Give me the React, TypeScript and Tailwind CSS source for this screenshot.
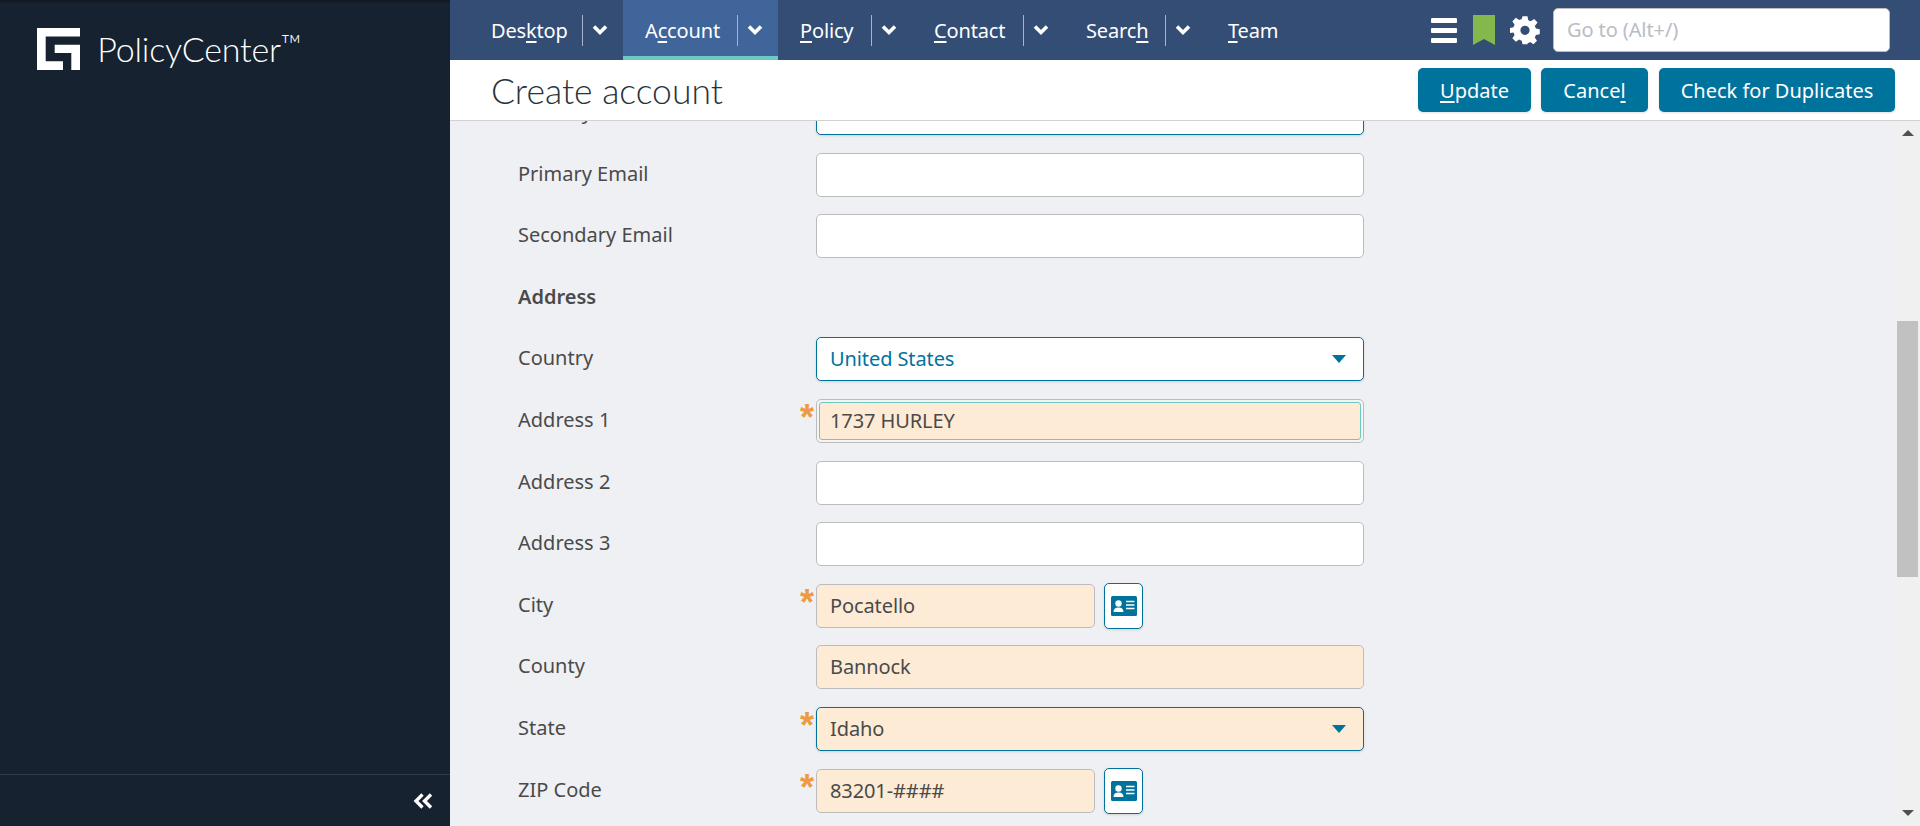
import { ReactNode } from 'react';

function Underlined({ before, letter, after }: { before?: string; letter: string; after?: string }) {
  return (
    <span>
      {before}
      <span className="underline underline-offset-[3px] decoration-[2px]">{letter}</span>
      {after}
    </span>
  );
}

function Chevron() {
  return (
    <svg viewBox="0 0 16 12" className="w-[16px] h-[12px]" fill="none" stroke="white" strokeWidth={3.6}>
      <path d="M2 2.5l6 6 6-6" />
    </svg>
  );
}

function NavItem({ label, split, active, w, pl }: { label: ReactNode; split?: boolean; active?: boolean; w: string; pl: string }) {
  return (
    <div className={`h-[60px] flex items-center ${pl} ${w} ${active ? 'bg-[#40659a] border-b-4 border-[#6cc8c0] pt-[4px]' : ''}`}>
      <span className="text-[20px] tracking-[-0.15px] pt-[1px]">{label}</span>
      {split && (
        <div className="flex items-center ml-auto mr-[15px]">
          <div className="w-px h-[31px] bg-[#a9b5c6] mr-[9px]" />
          <Chevron />
        </div>
      )}
    </div>
  );
}

function CardIcon() {
  return (
    <button className="w-[39px] h-[46px] -my-px ml-[9px] bg-white border border-[#00739d] rounded-[5px] flex items-center justify-center shadow-sm">
      <svg viewBox="0 0 26 20" className="w-[26px] h-[20px]">
        <rect width="26" height="20" rx="1.5" fill="#00739d" />
        <circle cx="7.5" cy="7.5" r="3.2" fill="white" />
        <path d="M2.5 16c0-3.2 2-4.6 5-4.6s5 1.4 5 4.6z" fill="white" />
        <path d="M15 5.5h8.5M15 9h8.5M15 12.5h8.5" stroke="white" strokeWidth="1.4" />
      </svg>
    </button>
  );
}

function Caret() {
  return (
    <svg viewBox="0 0 14 8" className="w-[14px] h-[8px] ml-auto mr-[17px]">
      <path d="M0 0h14L7 8z" fill="#00739d" />
    </svg>
  );
}

function Row({ label, required, children }: { label: string; required?: boolean; children?: ReactNode }) {
  return (
    <div className="h-[44px] flex items-center">
      <div className="w-[298px] text-[20px] text-[#4a4a4a] pb-[2px]">{label}</div>
      <div className="relative flex items-center">
        {required && (
          <span className="absolute left-[-16px] top-[-3px] text-[#ee9a3f] text-[36px] font-bold leading-[44px] h-[30px] font-['Liberation_Sans',sans-serif]">
            *
          </span>
        )}
        {children}
      </div>
    </div>
  );
}

function Field({ value, short, required }: { value?: string; short?: boolean; required?: boolean }) {
  return (
    <div
      className={`h-[44px] ${short ? 'w-[279px]' : 'w-[548px]'} ${required ? 'bg-[#feebd6]' : 'bg-white'} border border-[#bcbcbc] rounded-[5px] flex items-center pl-[13px] text-[20px] tracking-[-0.1px] text-[#4a4a4a]`}
    >
      {value}
    </div>
  );
}

function Select({ value, required }: { value: string; required?: boolean }) {
  return (
    <div
      className={`h-[44px] w-[548px] ${required ? 'bg-[#feebd6] text-[#4a4a4a]' : 'bg-white text-[#00739d]'} border border-[#00739d] rounded-[5px] flex items-center pl-[13px] text-[20px] tracking-[-0.1px] shadow-sm`}
    >
      {value}
      <Caret />
    </div>
  );
}

export default function App() {
  return (
    <div className="h-[826px] w-[1920px] flex overflow-hidden font-['Noto_Sans',sans-serif]">
      {/* sidebar */}
      <aside className="w-[450px] shrink-0 bg-[#172230] flex flex-col text-white">
        <div className="h-[4px] bg-gradient-to-b from-[#10171f] to-[#172230]" />
        <div className="flex items-start pl-[37px] pt-[24px] flex-1">
          <svg viewBox="0 0 43.300 42.300" className="w-[43.300px] h-[42.300px]" fill="white">
            <path d="M0 0h43.300v8.500H8.700v24.800H26v9H0z" />
            <path d="M17.700 16.700h25.600v25.600h-9V25H17.700z" />
          </svg>
          <div className="ml-[17px] -mt-[2px] text-[34px] leading-[46px] font-light font-['Lato',sans-serif] tracking-[-0.2px]">
            PolicyCenter<sup className="text-[28px] -top-[7px] relative align-baseline">™</sup>
          </div>
        </div>
        <div className="h-[52px] border-t border-[#2e3846] flex items-center justify-end pr-[17px]">
          <svg viewBox="0 0 20 16" className="w-[20px] h-[16px]" fill="none" stroke="white" strokeWidth={3.4}>
            <path d="M9.500 1.500L3 8l6.500 6.500M18 1.500L11.500 8l6.500 6.500" />
          </svg>
        </div>
      </aside>

      <div className="flex-1 flex flex-col min-w-0">
        {/* top nav */}
        <nav className="h-[60px] shrink-0 bg-[#334d75] flex items-center text-white">
          <NavItem w="w-[173px]" pl="pl-[41px]" split label={<Underlined before="Des" letter="k" after="top" />} />
          <NavItem w="w-[155px]" pl="pl-[22px]" split active label={<Underlined before="A" letter="c" after="count" />} />
          <NavItem w="w-[134px]" pl="pl-[22px]" split label={<Underlined letter="P" after="olicy" />} />
          <NavItem w="w-[152px]" pl="pl-[22px]" split label={<Underlined letter="C" after="ontact" />} />
          <NavItem w="w-[142px]" pl="pl-[22px]" split label={<Underlined before="Searc" letter="h" />} />
          <NavItem w="w-[100px]" pl="pl-[22px]" label={<Underlined letter="T" after="eam" />} />
          <div className="ml-auto flex items-center pr-[30px]">
            <div className="flex flex-col gap-[5px] w-[26px] mr-[16px]">
              <div className="h-[5px] bg-white rounded-[1px]" />
              <div className="h-[5px] bg-white rounded-[1px]" />
              <div className="h-[5px] bg-white rounded-[1px]" />
            </div>
            <svg viewBox="0 0 22 30" className="w-[22px] h-[30px] mr-[15px]">
              <path d="M0 0h22v30l-11-6-11 6z" fill="#84b84c" />
            </svg>
            <svg viewBox="0 0 24 24" className="w-[30px] h-[30px] mr-[13px]" fill="white">
              <path
                fillRule="evenodd"
                d="M10 1h4l.6 3.100c.7.200 1.400.500 2 .900l2.700-1.800 2.800 2.800L19.800 8.700c.400.600.700 1.300.900 2l3.100.600v4l-3.100.600c-.200.700-.500 1.400-.900 2l1.800 2.700-2.800 2.800-2.700-1.800c-.600.400-1.300.700-2 .900L14 23.400h-4l-.6-2.900c-.7-.200-1.400-.500-2-.900l-2.700 1.800-2.800-2.800 1.800-2.700c-.400-.600-.700-1.300-.900-2L0 14.300v-4l2.800-.600c.200-.700.500-1.400.900-2L1.900 5l2.800-2.800 2.700 1.800c.600-.400 1.300-.700 2-.900zM12 8.500a3.700 3.700 0 100 7.400 3.700 3.700 0 000-7.400z"
              />
            </svg>
            <div className="w-[337px] h-[44px] bg-white rounded-[5px] border border-[#bcbcbc] flex items-center pl-[13px] text-[20px] tracking-[-0.1px] text-[#b9bdc4]">
              Go to (Alt+/)
            </div>
          </div>
        </nav>

        {/* title bar */}
        <div className="h-[61px] shrink-0 bg-white border-b border-[#d2d2d2] flex items-start pl-[41px] pr-[25px] pt-[8px]">
          <h1 className="text-[35.500px] leading-[44px] mt-[1px] font-light font-['Lato',sans-serif] text-[#28323c]">Create account</h1>
          <div className="ml-auto flex gap-[10px] text-white text-[20px]">
            <button className="w-[113px] h-[44px] pt-[1px] bg-[#00739d] rounded-[5px] shadow-sm">
              <Underlined letter="U" after="pdate" />
            </button>
            <button className="w-[107px] h-[44px] pt-[1px] mr-[1px] bg-[#00739d] rounded-[5px] shadow-sm">
              <Underlined before="Cance" letter="l" />
            </button>
            <button className="w-[236px] h-[44px] pt-[1px] bg-[#00739d] rounded-[5px] shadow-sm">Check for Duplicates</button>
          </div>
        </div>

        {/* form */}
        <div className="flex-1 min-h-0 flex bg-[#eff0f4]">
          <div className="flex-1 overflow-hidden pl-[68px]">
            <div className="flex flex-col gap-[17.600px] -mt-[30px]">
              <Row label="Primary Phone">
                <div className="h-[44px] w-[548px] bg-white border border-[#00739d] rounded-[5px] shadow-sm" />
              </Row>
              <Row label="Primary Email"><Field /></Row>
              <Row label="Secondary Email"><Field /></Row>
              <div className="h-[44px] flex items-center text-[20px] font-semibold text-[#4a4a4a] pb-[2px]">Address</div>
              <Row label="Country"><Select value="United States" /></Row>
              <Row label="Address 1" required>
                <div className="h-[44px] w-[548px] border border-[#bcbcbc] rounded-[5px] p-[2px] bg-[#f4f4f2]">
                  <div className="h-full bg-[#feebd6] border border-[#6cc8c0] rounded-[3px] flex items-center pl-[10px] text-[20px] tracking-[-0.1px] text-[#4a4a4a]">
                    1737 HURLEY
                  </div>
                </div>
              </Row>
              <Row label="Address 2"><Field /></Row>
              <Row label="Address 3"><Field /></Row>
              <Row label="City" required><Field short required value="Pocatello" /><CardIcon /></Row>
              <Row label="County"><Field required value="Bannock" /></Row>
              <Row label="State" required><Select required value="Idaho" /></Row>
              <Row label="ZIP Code" required><Field short required value="83201-####" /><CardIcon /></Row>
            </div>
          </div>
          {/* scrollbar */}
          <div className="w-[26px] bg-[#f0f0f0] flex flex-col items-center pl-[1px]">
            <svg viewBox="0 0 12 6" className="w-[12px] h-[6px] mt-[9px]"><path d="M6 0l6 6H0z" fill="#505050" /></svg>
            <div className="w-[21px] h-[256px] bg-[#c1c1c1] mt-[185px]" />
            <svg viewBox="0 0 12 6" className="w-[12px] h-[6px] mt-[233px]"><path d="M0 0h12L6 6z" fill="#505050" /></svg>
          </div>
        </div>
      </div>
    </div>
  );
}
